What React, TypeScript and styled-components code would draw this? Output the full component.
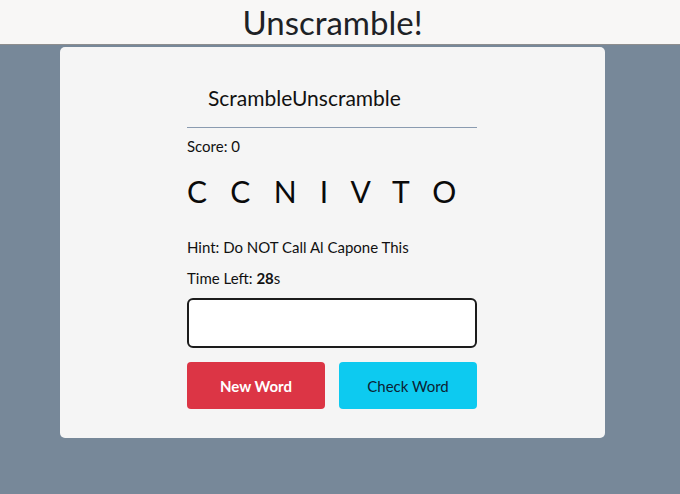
import React from 'react'
import styled, {createGlobalStyle} from 'styled-components'

const GlobalStyle = createGlobalStyle`
  * {
    box-sizing: border-box;
  }
  html, body {
    margin: 0;
    padding: 0;
    background: #778899;
    font-family: Lato, "Open Sans", Arial, sans-serif;
    color: #111;
  }
`

const Page = styled.div`
  width: 665px;
`

const Header = styled.header`
  height: 45px;
  background: #f8f7f6;
  border-bottom: 1px solid #8e8e8e;
  display: flex;
  align-items: center;
  justify-content: center;
  margin-right: -15px;
  padding-right: 15px;
`

const HeaderTitle = styled.h1`
  margin: 0;
  font-size: 33px;
  font-weight: 400;
  color: #1e2226;
  line-height: 45px;
`

const Card = styled.main`
  width: 545px;
  margin: 2px auto 0;
  background: #f5f5f5;
  border-radius: 5px;
  padding: 38px 0 29px 127px;
`

const Column = styled.div`
  width: 290px;
  display: flex;
  flex-direction: column;
`

const GameTitle = styled.h2`
  margin: 0;
  padding-left: 21px;
  font-size: 21px;
  font-weight: 400;
  line-height: 26px;
  color: #111;
`

const Divider = styled.hr`
  margin: 16px 0 0;
  border: 0;
  border-top: 1px solid #8a9bb0;
`

const InfoLine = styled.p<{$gap: number}>`
  margin: ${p => p.$gap}px 0 0;
  font-size: 15px;
  line-height: 20px;
  color: #111;
`

const Letters = styled.div`
  margin-top: 17px;
  font-size: 30px;
  line-height: 36px;
  letter-spacing: 7.8px;
  white-space: pre;
  color: #0a0a0a;
`

const WordInput = styled.input`
  margin-top: 10px;
  height: 50px;
  width: 100%;
  border: 2px solid #1c1c1c;
  border-radius: 6px;
  background: #fff;
  font-family: inherit;
  font-size: 18px;
  padding: 0 12px;
  outline: none;
`

const Buttons = styled.div`
  margin-top: 14px;
  display: grid;
  grid-template-columns: 1fr 1fr;
  gap: 14px;
`

const Button = styled.button<{$variant: 'danger' | 'info'}>`
  height: 47px;
  border: 0;
  border-radius: 4px;
  font-family: inherit;
  font-size: 15px;
  cursor: pointer;
  background: ${p => (p.$variant === 'danger' ? '#dc3545' : '#0dcaf0')};
  color: ${p => (p.$variant === 'danger' ? '#fff' : '#0c2233')};
  font-weight: ${p => (p.$variant === 'danger' ? 700 : 400)};
`

export default function App() {
  const letters = ['C', 'C', 'N', 'I', 'V', 'T', 'O']
  return (
    <Page>
      <GlobalStyle />
      <Header>
        <HeaderTitle>Unscramble!</HeaderTitle>
      </Header>
      <Card>
        <Column>
          <GameTitle>ScrambleUnscramble</GameTitle>
          <Divider />
          <InfoLine $gap={8}>Score: 0</InfoLine>
          <Letters>{letters.join(' ')}</Letters>
          <InfoLine $gap={28}>Hint: Do NOT Call Al Capone This</InfoLine>
          <InfoLine $gap={11}>
            Time Left: <b>28</b>s
          </InfoLine>
          <WordInput type="text" />
          <Buttons>
            <Button $variant="danger">New Word</Button>
            <Button $variant="info">Check Word</Button>
          </Buttons>
        </Column>
      </Card>
    </Page>
  )
}
